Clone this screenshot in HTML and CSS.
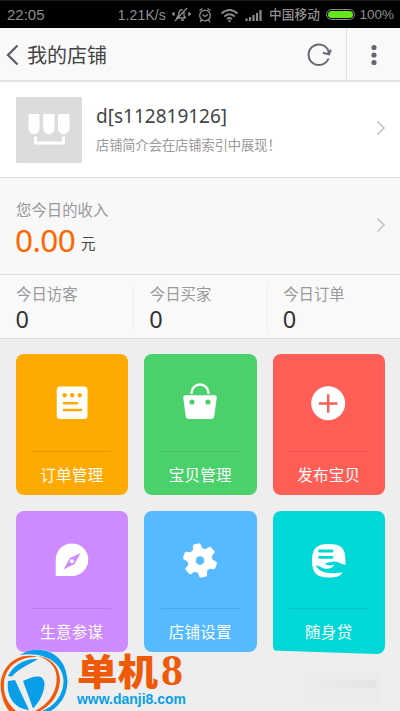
FILE: index.html
```html
<!DOCTYPE html>
<html lang="zh-CN">
<head>
<meta charset="utf-8">
<title>我的店铺</title>
<link rel="stylesheet" href="styles.css">
</head>
<body>
<div class="phone">
  <div class="status">
    <span class="time">22:05</span>
    <span class="speed">1.21K/s</span>
    <svg class="st-icons" width="90" height="20" viewBox="0 0 90 20" fill="none" stroke="#8c8c8c" stroke-width="1.3">
      <path d="M4 13h9M5 12q2-1 2-5 1-3 4-2M12 7v4l2 2M9 15h3M15 3L3 16M2 7v4M17 7v4M0.8 8v2M18.2 8v2"/>
      <circle cx="33" cy="10.5" r="5.3"/><path d="M30.5 9.5l2.5 2 3-2M27.5 5.5l3-2M38.5 5.5l-3-2M29.500 15l-1.500 2M36.500 15l1.500 2"/>
      <path d="M49.500 8.500q8-7 16 0M52.300 11.500q5.200-4.500 10.400 0M55 14q2.500-2 5 0" stroke-width="1.7"/><circle cx="57.500" cy="16" r="1.2" fill="#8c8c8c" stroke="none"/>
      <path d="M74.500 16v-2.500M78 16v-4M81.500 16v-6M85 16v-8M88.500 16v-11" stroke-width="2.200"/>
    </svg>
    <span class="carrier">中国移动</span>
    <span class="battery"><i></i></span>
    <span class="percent">100%</span>
  </div>
  <header class="bar">
    <svg class="back" width="14" height="22" viewBox="0 0 14 22"><path d="M11.500 1.500L2 11l9.500 9.500" fill="none" stroke="#5b6069" stroke-width="2.300"/></svg>
    <h1>我的店铺</h1>
    <svg class="reload" width="26" height="26" viewBox="0 0 26 26" fill="none" stroke="#63676f" stroke-width="2"><path d="M22.500 16.500A10.300 10.300 0 1 1 22.500 9v3"/><path d="M17 10.700l6 1.700 1.900-4.700"/></svg>
    <div class="more"><svg width="8" height="24" viewBox="0 0 8 24" fill="#63676f"><circle cx="4" cy="4.500" r="2.600"/><circle cx="4" cy="12" r="2.600"/><circle cx="4" cy="19.500" r="2.600"/></svg></div>
  </header>
  <section class="shop">
    <svg class="avatar" width="66" height="66" viewBox="0 0 66 66"><rect width="66" height="66" rx="1" fill="#dcdcdc"/><path d="M12.500 17h11v14.500a5.500 5.500 0 0 1-11 0zM27.200 17h11.300v14.500a5.600 5.600 0 0 1-11.300 0zM42 17h11.500v14.500a5.700 5.700 0 0 1-11.500 0z" fill="#fff"/><path d="M19.500 39.500v6.500h28v-6.500" fill="none" stroke="#fff" stroke-width="3"/></svg>
    <div class="info"><div class="name">d[s112819126]</div><div class="desc">店铺简介会在店铺索引中展现！</div></div>
    <svg class="chev" width="10" height="16" viewBox="0 0 10 16"><path d="M1.500 1.500L8 8l-6.500 6.500" fill="none" stroke="#c4c4c4" stroke-width="1.700"/></svg>
  </section>
  <section class="income">
    <div class="info"><div class="label">您今日的收入</div><div class="sum"><b>0.00</b><span>元</span></div></div>
    <svg class="chev" width="10" height="16" viewBox="0 0 10 16"><path d="M1.500 1.500L8 8l-6.500 6.500" fill="none" stroke="#c4c4c4" stroke-width="1.700"/></svg>
  </section>
  <section class="stats">
    <div class="stat"><div class="label">今日访客</div><div class="num">0</div></div>
    <div class="stat"><div class="label">今日买家</div><div class="num">0</div></div>
    <div class="stat"><div class="label">今日订单</div><div class="num">0</div></div>
  </section>
  <main class="grid">
    <div class="tile orange">
      <svg width="40" height="40" viewBox="0 0 40 40"><rect x="4.700" y="4.500" width="30.800" height="32.500" rx="3.500" fill="#fff"/><g fill="#ffaa00"><circle cx="12.700" cy="13.300" r="2.200"/><circle cx="20.200" cy="13.300" r="2.200"/><circle cx="27.700" cy="13.300" r="2.200"/></g><path d="M12 21.200h13M12 28h17" stroke="#ffaa00" stroke-width="2.600" stroke-linecap="round"/></svg>
      <p>订单管理</p>
    </div>
    <div class="tile green">
      <svg width="40" height="40" viewBox="0 0 40 40"><path d="M11.500 12v-1a8.500 8.500 0 0 1 17 0v1" fill="none" stroke="#fff" stroke-width="2.400"/><path d="M5.500 13.300h29q2.500 0 2.200 2.500l-2.400 18q-.4 3.200-3.400 3.200H9q-3 0-3.400-3.200L3.300 15.800q-.3-2.500 2.200-2.500z" fill="#fff"/><g fill="#4bd16b"><circle cx="12" cy="20" r="2.600"/><circle cx="28" cy="20" r="2.600"/></g></svg>
      <p>宝贝管理</p>
    </div>
    <div class="tile red">
      <svg width="40" height="40" viewBox="0 0 40 40"><circle cx="19.200" cy="21.300" r="17" fill="#fff"/><path d="M10 21.500h18.500M19.200 12.300v18.500" stroke="#ff5e57" stroke-width="2.400"/></svg>
      <p>发布宝贝</p>
    </div>
    <div class="tile purple">
      <svg width="40" height="40" viewBox="0 0 40 40"><path d="M3.700 37V21A16.300 16.300 0 1 1 20 37z" fill="#fff"/><path d="M28.700 14L22.500 25 11.500 30.500 18 19z" fill="#ce8aff"/><circle cx="20" cy="22.300" r="2" fill="#fff"/></svg>
      <p>生意参谋</p>
    </div>
    <div class="tile blue">
      <svg width="40" height="40" viewBox="0 0 40 40"><g fill="#fff" transform="rotate(-12 20 21.500)"><circle cx="20" cy="21.500" r="12.500"/><g id="cog"><path d="M15 12l.8-5.500q.3-2 2-2h4.400q1.700 0 2 2l.8 5.500zM15 31l.8 5.500q.3 2 2 2h4.400q1.700 0 2-2l.8-5.500z"/></g><use href="#cog" transform="rotate(60 20 21.500)"/><use href="#cog" transform="rotate(120 20 21.500)"/></g><circle cx="20" cy="21.500" r="4.300" fill="#55baff"/></svg>
      <p>店铺设置</p>
    </div>
    <div class="tile cyan">
      <svg width="40" height="40" viewBox="0 0 40 40"><path d="M19.500 5C32 5 36.500 9 36.500 21.500v4.300c-4-.2-6.500-3.300-11.500-3.300-3.500 0-5.500 1-9 2 2 2.500 6 2 9.300 1.500-1.800 3-6 4.500-10 3.500-3-.8-5-3-8.500-3 1 2 3 4.500 6.500 6 6 2.500 13 1.500 20.200 1C31.500 37.500 27 38.500 20 38.500 7.500 38.500 3 34 3 21.500S8 5 19.500 5z" fill="#fff"/><path d="M10.500 12h12.500M10.500 18.300h12.500" stroke="#00d8d8" stroke-width="2.800" stroke-linecap="round"/></svg>
      <p>随身贷</p>
    </div>
  </main>
  <svg class="brand" width="190" height="66" viewBox="0 645 190 66">
    <path d="M13 663C20 653 32 649 41 649.500 57 651 68 664 67.500 682c-.5 13-7 23-15 29H8C0 700-2 688 3 677c2-6 5-10 10-14z" fill="#eeeeee"/>
    <path d="M20 655C38 643 67 651 67.500 682c-.5 14-8 24-17 29H42c13-5 21-16 21.500-29C64 666 48 651 20 655z" fill="#0a9ee8"/>
    <path d="M38 657C18 651 0 666 .7 687c.8 11 4 18 8.300 24h7C8 704 3 695 4 683c1-16 15-27 34-26z" fill="#ee5a0a"/>
    <path d="M38 656c15 2 22 13 22 25-1 13-8 24-20 30h-5c12-6 20-16 21.500-29C58 669 51 660 38 656z" fill="#ee5a0a"/>
    <path d="M38 659C25 658 13 665 8 676l4 .5C18 669 28 665 38 659z" fill="#0a9ee8"/>
    <path d="M8 681l7-1L29 710C15 709 6 697 8 681z" fill="#0a9ee8"/>
    <path d="M23 681c6-3 12-5 16-4.500 5 1 6.500 6 5 12-2 9-6 15-11 20z" fill="#0a9ee8"/>
    <text class="brand-name" x="77" y="685.500" textLength="81" lengthAdjust="spacingAndGlyphs">单机</text>
    <text class="brand-eight" x="161" y="684.500" textLength="22" lengthAdjust="spacingAndGlyphs">8</text>
    <text class="brand-url" x="77" y="703.500" textLength="109" lengthAdjust="spacingAndGlyphs">www.danji8.com</text>
  </svg>
  <div class="smudge"><i></i></div>
</div>
</body>
</html>
```
FILE: styles.css
```css
* { box-sizing: border-box; }
body { margin: 0; font-family: "Noto Sans", "Noto Sans CJK SC", sans-serif; color: #444; }
h1, p { margin: 0; font-weight: 400; }
svg { display: block; flex: none; }
.phone { position: relative; width: 400px; height: 711px; overflow: hidden; background: #eee; }
.status { display: flex; align-items: center; height: 28px; padding: 0 6px 0 7px; background: #000; border-top: 1px solid #1c1c1c; color: #8f8f8f; font: 14.500px/28px "Liberation Sans", "Noto Sans CJK SC", sans-serif; white-space: nowrap; }
.time { width: 112px; font-size: 15px; }
.speed { width: 55px; font-size: 14px; letter-spacing: .1px; }
.st-icons { margin-right: 7px; }
.carrier { width: 58px; font-size: 12.700px; font-weight: 500; }
.battery { width: 29px; height: 11px; padding: 1px; border: 1px solid #8c8c8c; border-radius: 6px; margin-right: 4px; flex: none; }
.battery i { display: block; height: 7px; border-radius: 4px; background: #67e51c; }
.percent { font-size: 13.500px; }
.bar { display: flex; align-items: center; height: 54px; padding-left: 6px; background: #f9f9f9; border-bottom: 2px solid #e2e2e2; }
.bar h1 { flex: 1; margin-left: 7px; padding-top: 4px; font-size: 20px; line-height: 48px; }
.back, .reload, .more svg { margin-top: 2px; }
.reload { margin-right: 14px; }
.more { width: 54px; height: 52px; display: flex; align-items: center; justify-content: center; border-left: 1px solid #e2e2e2; }
.shop { display: flex; align-items: center; height: 96px; padding: 0 14px 0 16px; background: #fff; border-bottom: 1px solid #dedede; }
.info { flex: 1; }
.shop .info { margin-left: 14px; }
.shop .chev { margin-top: -4px; }
.name { font-size: 19px; line-height: 28px; }
.desc { margin-top: 3px; font-size: 13.200px; line-height: 24px; color: #999; }
.income { display: flex; align-items: center; height: 97px; padding: 0 14px 0 16px; background: #f8f8f8; border-bottom: 1px solid #dedede; }
.income .info { padding-top: 12px; }
.income .chev { margin-top: -3px; }
.label { font-size: 15.400px; line-height: 20px; color: #999; }
.sum { display: flex; align-items: baseline; height: 44px; margin-top: -2px; }
.sum b { font-size: 31.500px; line-height: 42px; font-weight: 400; color: #ff6600; letter-spacing: -.6px; margin-left: -1px; }
.sum span { margin: 0 0 4px 6px; font-size: 14.500px; transform: translateY(-3px); }
.stats { display: flex; height: 64px; padding-top: 10px; background: #f9f9f9; border-bottom: 1px solid #dedede; }
.stat { width: 134px; height: 46px; padding-left: 16px; }
.stat + .stat { padding-left: 16.500px; box-shadow: inset 1px 0 #eee; }
.num { font-size: 23.500px; line-height: 29px; color: #333; margin-left: -.5px; }
.grid { display: grid; grid-template-columns: 112.500px 112.500px 112.500px; column-gap: 16px; row-gap: 16px; padding: 15px 0 0 15.500px; }
.tile { display: flex; flex-direction: column; align-items: center; height: 141px; padding-top: 28px; border-radius: 8px; color: #fff; }
.tile p { width: 79px; margin-top: 28.500px; padding-top: 12px; border-top: 1px solid rgba(0,0,0,.1); text-align: center; font-size: 15.500px; line-height: 22px; letter-spacing: .3px; }
.orange { background: #ffaa00; }
.green { background: #4bd16b; }
.red { background: #ff5e57; }
.purple { background: #ce8aff; }
.blue { background: #55baff; }
.cyan { background: #00d8d8; height: 143px; clip-path: polygon(0 0, 100% 0, 100% 100%, 92% 100%, 0 97.500%); }
.brand { position: absolute; left: 0; top: 645px; }
.brand-name { font: 900 37px "Noto Sans CJK SC", sans-serif; fill: #ee5a0a; }
.brand-eight { font: bold 45px "Liberation Serif", serif; fill: #ee5a0a; }
.brand-url { font: bold 14px "Liberation Sans", sans-serif; fill: #0a9ee8; }
.smudge { position: absolute; left: 305px; top: 672px; width: 76px; height: 31px; padding: 8px 5px 0 15px; background: #ebebeb; }
.smudge i { display: block; height: 8px; background: linear-gradient(90deg, #ebebeb, #e3e4e4); }
```
